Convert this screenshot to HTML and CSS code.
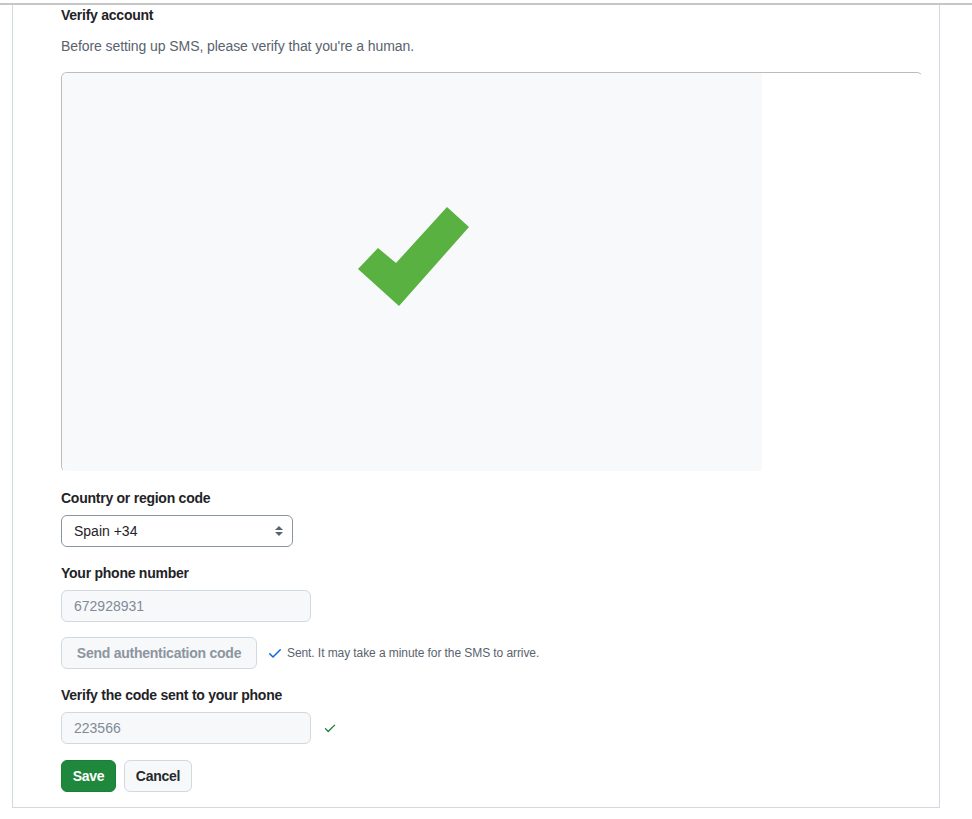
FILE: index.html
```html
<!DOCTYPE html>
<html lang="en">
<head>
<meta charset="utf-8">
<title>Verify account</title>
<link rel="stylesheet" href="styles.css">
</head>
<body>
<div class="topline"></div>
<div class="box">
  <h3 class="title">Verify account</h3>
  <p class="note">Before setting up SMS, please verify that you're a human.</p>
  <div class="captcha">
    <div class="captcha-inner">
      <svg class="bigcheck" width="112" height="100" viewBox="0 0 112 100"><polygon points="1,62 21,41 39,56 90,0 112,20 42,99" fill="#58b141"/></svg>
    </div>
  </div>

  <div class="field">
    <label class="label">Country or region code</label>
    <div class="select">
      <span>Spain +34</span>
      <svg width="8" height="12" viewBox="0 0 8 12"><polygon points="4,1 8,5 0,5" fill="#59636e"/><polygon points="0,7 8,7 4,11" fill="#59636e"/></svg>
    </div>
  </div>

  <div class="field">
    <label class="label">Your phone number</label>
    <div class="input disabled">672928931</div>
  </div>

  <div class="row">
    <button class="btn btn-disabled">Send authentication code</button>
    <svg class="ok-blue" width="16" height="16" viewBox="0 0 16 16"><path fill="#0969da" d="M13.78 4.22a.75.75 0 0 1 0 1.06l-7.25 7.25a.75.75 0 0 1-1.06 0L2.22 9.28a.751.751 0 0 1 .018-1.042.751.751 0 0 1 1.042-.018L6 10.94l6.72-6.72a.75.75 0 0 1 1.06 0Z"/></svg>
    <span class="sent">Sent. It may take a minute for the SMS to arrive.</span>
  </div>

  <div class="field">
    <label class="label">Verify the code sent to your phone</label>
    <div class="row">
      <div class="input disabled">223566</div>
      <svg class="ok-green" width="14" height="14" viewBox="0 0 16 16"><path fill="#1a7f37" d="M13.78 4.22a.75.75 0 0 1 0 1.06l-7.25 7.25a.75.75 0 0 1-1.06 0L2.22 9.28a.751.751 0 0 1 .018-1.042.751.751 0 0 1 1.042-.018L6 10.94l6.72-6.72a.75.75 0 0 1 1.06 0Z"/></svg>
    </div>
  </div>

  <div class="actions">
    <button class="btn btn-primary">Save</button>
    <button class="btn btn-cancel">Cancel</button>
  </div>
</div>
</body>
</html>
```
FILE: styles.css
```css
* { box-sizing: border-box; }
html, body { margin: 0; padding: 0; background: #fff; }
body {
  font-family: "Liberation Sans", Arial, sans-serif;
  font-size: 14px;
  line-height: 21px;
  color: #1f2328;
}
.topline {
  margin-top: 3px;
  height: 2px;
  background: #c6c6c6;
}
.box {
  margin: 0 32px 0 12px;
  border-left: 1px solid #d1d9e0;
  border-right: 1px solid #d1d9e0;
  border-bottom: 1px solid #d1d9e0;
  padding: 0 16px 15px 48px;
}
.title {
  margin: 0;
  font-size: 14px;
  font-weight: 600;
  line-height: 21px;
  letter-spacing: -0.25px;
}
.note {
  margin: 10px 0 15px;
  color: #59636e;
  letter-spacing: -0.08px;
}
.captcha {
  width: 862px;
  height: 400px;
  border-top: 1px solid #bcbcbc;
  border-left: 1px solid #bcbcbc;
  border-right: 1px solid transparent;
  border-bottom: 1px solid transparent;
  border-radius: 6px;
  overflow: hidden;
}
.captcha-inner {
  width: 700px;
  height: 398px;
  background: #f8f9fb;
  position: relative;
}
.bigcheck {
  position: absolute;
  left: 295px;
  top: 134px;
}
.field { margin-top: 16px; }
.label {
  display: block;
  font-weight: 600;
  margin-bottom: 6px;
  letter-spacing: -0.25px;
}
.select {
  width: 232px;
  height: 32px;
  border: 1px solid #8c959f;
  border-radius: 6px;
  display: flex;
  align-items: center;
  justify-content: space-between;
  padding: 0 9px 0 12px;
  color: #1f2328;
}
.input {
  width: 250px;
  height: 32px;
  border: 1px solid #d1d9e0;
  border-radius: 6px;
  display: flex;
  align-items: center;
  padding: 0 12px;
}
.input.disabled {
  background: #f6f8fa;
  color: #818b98;
}
.row {
  display: flex;
  align-items: center;
}
.field + .row { margin-top: 15px; }
.ok-blue { margin: 0 4px 0 10px; }
.sent { font-size: 12px; color: #59636e; letter-spacing: -0.08px; }
.ok-green { margin-left: 12px; }
.btn {
  height: 32px;
  padding: 0 8px;
  font-family: inherit;
  font-size: 14px;
  font-weight: 600;
  letter-spacing: -0.25px;
  white-space: nowrap;
  border: 1px solid #d1d9e0;
  border-radius: 6px;
  background: #f6f8fa;
  color: #25292e;
  cursor: pointer;
}
.btn-disabled {
  width: 196px;
  color: #8c959f;
}
.btn-primary {
  width: 55px;
  background: #1f883d;
  border-color: #1a7f37;
  color: #fff;
}
.btn-cancel { width: 68px; }
.actions {
  display: flex;
  gap: 8px;
  margin-top: 16px;
}
```
